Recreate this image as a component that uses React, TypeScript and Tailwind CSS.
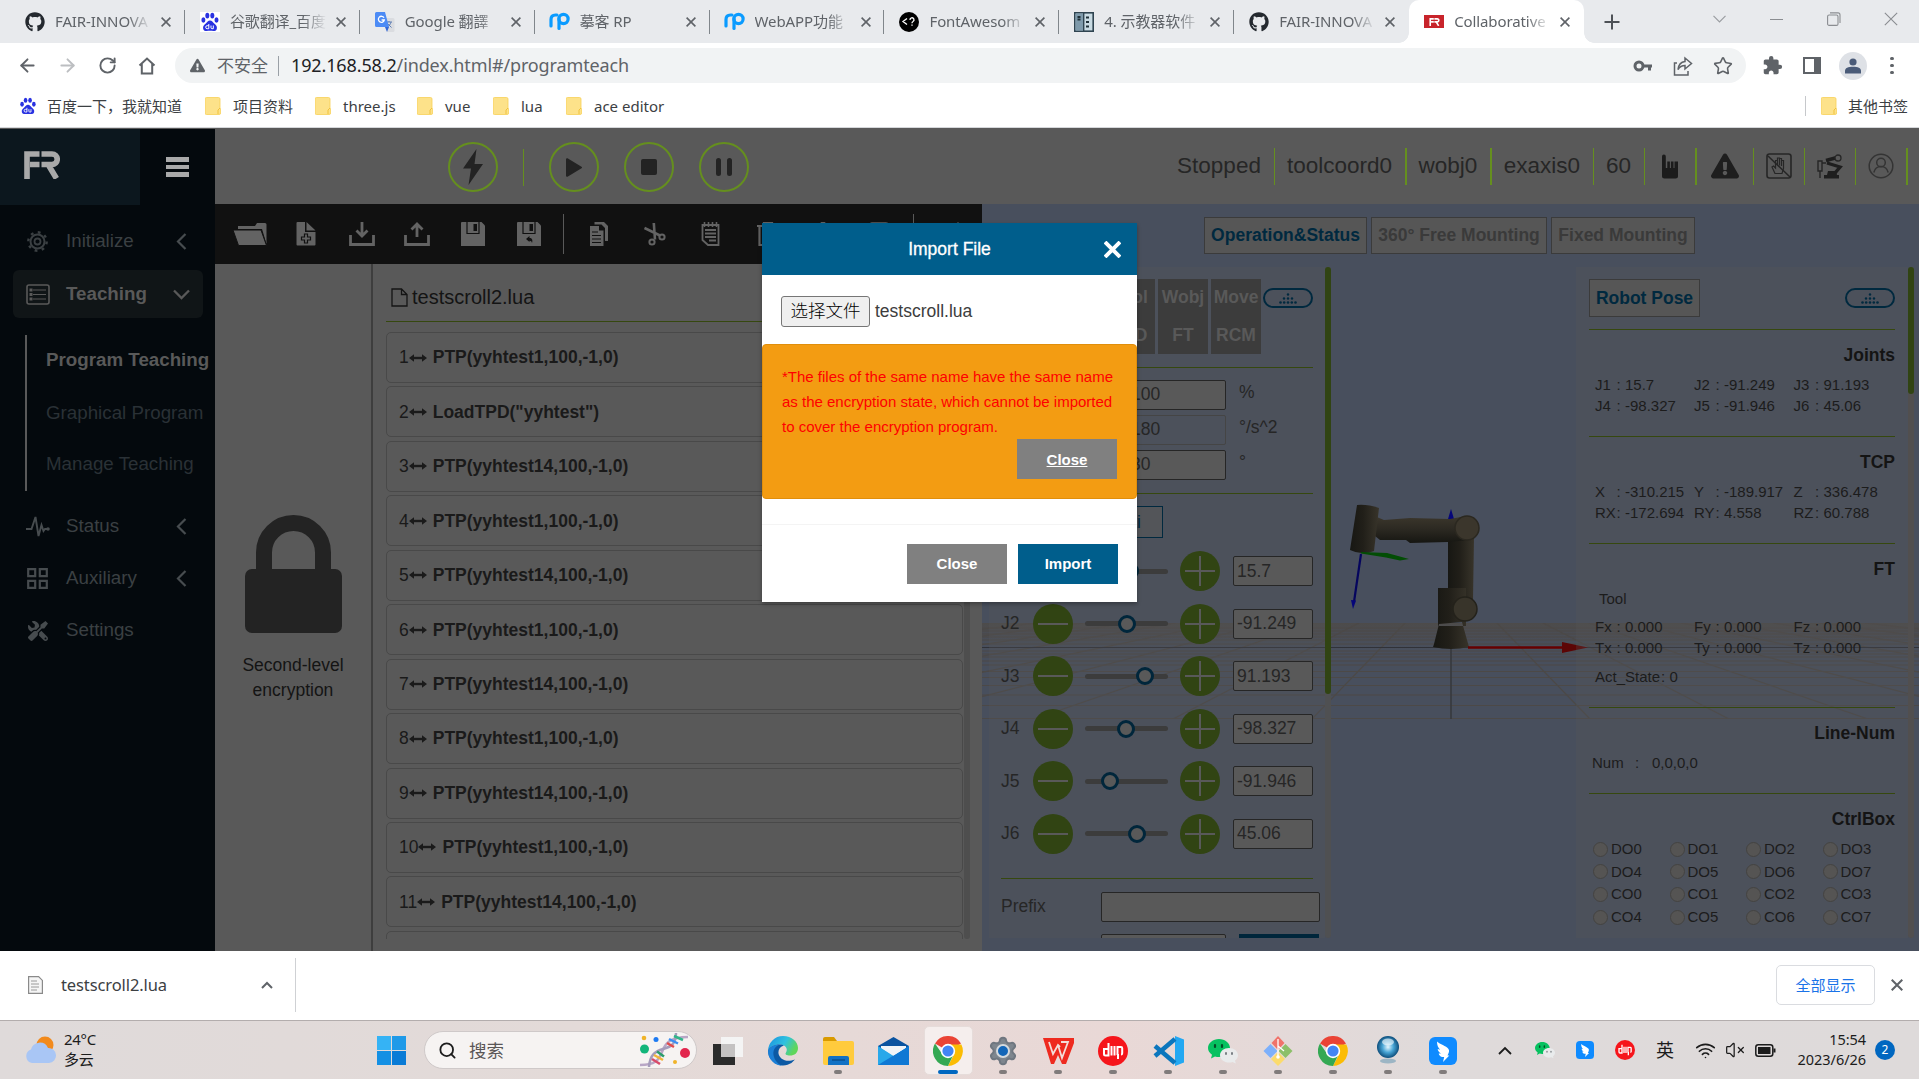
import React from "react";
import { FaGithub, FaExclamationTriangle, FaTools } from "react-icons/fa";
import { MdExtension } from "react-icons/md";
import { Settings, Wifi, VolumeX, Search, Star, RotateCw, ArrowLeft, ArrowRight } from "lucide-react";

type P = { children?: React.ReactNode; w: number; h: number; vb: string; className?: string };
const Svg = ({ children, w, h, vb, className }: P) => (
  <svg width={w} height={h} viewBox={vb} fill="none" className={`block shrink-0 ${className ?? ""}`}>
    {children}
  </svg>
);

const CHROME_FONT = "font-['Noto_Sans','Noto_Sans_CJK_SC',sans-serif]";

/* ---------- browser chrome ---------- */

const Baidu = ({ s = 20 }: { s?: number }) => (
  <Svg w={s} h={s} vb="0 0 20 20">
    <ellipse cx="3.4" cy="8" rx="2" ry="2.7" fill="#2932e1" />
    <ellipse cx="7.3" cy="3.6" rx="2" ry="2.9" fill="#2932e1" />
    <ellipse cx="12.3" cy="3.6" rx="2" ry="2.9" fill="#2932e1" />
    <ellipse cx="16.5" cy="8" rx="2" ry="2.7" fill="#2932e1" />
    <path d="M10 8.6c2 0 2.8 1.6 4.2 3 1.6 1.5 3.300 2.700 2.600 5.300-.8 2.800-4 1.900-6.800 1.900s-6 .9-6.800-1.900c-.7-2.600 1-3.800 2.600-5.300C7.200 10.200 8 8.600 10 8.600z" fill="#2932e1" />
    <path d="M8.800 12v4.700H7.200a1.500 1.500 0 010-3h1.600M11 13.500v2.300c0 .7.4.9 1 .9h1.300v-3.200" stroke="#fff" strokeWidth="1" />
  </Svg>
);

const Rp = () => (
  <Svg w={21} h={19} vb="0 0 21 19">
    <path d="M2 14V7.500C2 4.500 3.500 3 6.500 3H8" stroke="#0a9bff" strokeWidth="3.200" strokeLinecap="round" />
    <circle cx="14.500" cy="7" r="4.600" stroke="#0a9bff" strokeWidth="3.200" />
    <path d="M10 7v9.500" stroke="#0a9bff" strokeWidth="3.200" strokeLinecap="round" />
  </Svg>
);

const FrMark = ({ w, h, color }: { w: number; h: number; color: string }) => (
  <Svg w={w} h={h} vb="0 0 36 28">
    <path d="M3 28V3h12.500M6 13.500h9.500M17.500 3h10.500a5 5 0 010 10.500H17.500M25 15l7.500 12.500" stroke={color} strokeWidth="5.600" />
  </Svg>
);

const tabs = [
  { t: "FAIR-INNOVA", i: <FaGithub size={20} color="#24292f" /> },
  { t: "谷歌翻译_百度", i: <div className="bg-white"><Baidu /></div> },
  {
    t: "Google 翻譯",
    i: (
      <Svg w={20} h={20} vb="0 0 20 20">
        <path d="M8 6h10a1.500 1.500 0 011.500 1.500v11a1.500 1.500 0 01-1.500 1.500h-6z" fill="#dadce0" />
        <path d="M11 10h6M14 9v1M16 10c-.5 2.500-2 4-4 5M13 12l3.500 3.500" stroke="#5f7fb5" strokeWidth="1" />
        <path d="M1.500 0H10l4 15H1.500A1.500 1.500 0 010 13.500v-12A1.500 1.500 0 011.500 0z" fill="#4c8bf5" />
        <path d="M12 20l2-5h-4z" fill="#3367d6" />
        <path d="M9 5.800A3 3 0 109.300 8H6.600" stroke="#fff" strokeWidth="1.300" />
      </Svg>
    ),
  },
  { t: "摹客 RP", i: <Rp /> },
  { t: "WebAPP功能", i: <Rp /> },
  {
    t: "FontAwesom",
    i: (
      <Svg w={20} h={20} vb="0 0 20 20">
        <circle cx="10" cy="10" r="10" fill="#000" />
        <path d="M8 6.500L4 9.500l4 3M11 8a2 2 0 113 1.500c-.8.4-1 .8-1 1.700M13 12.500v1.300" stroke="#fff" strokeWidth="1.300" />
      </Svg>
    ),
  },
  {
    t: "4. 示教器软件",
    i: (
      <Svg w={20} h={20} vb="0 0 20 20">
        <rect x=".8" y=".8" width="18.400" height="18.400" fill="#c9dbe3" stroke="#2f4450" strokeWidth="1.600" />
        <rect x="1.500" y="1.500" width="7.500" height="17" fill="#7e9aab" />
        <path d="M9.700 1v18" stroke="#2f4450" strokeWidth="1.400" />
        <path d="M3.500 5h3M3.500 7.500h3M12 5.500h4M12 10h4M12 14.500h4" stroke="#1f3038" strokeWidth="2" strokeDasharray="3 1" />
      </Svg>
    ),
  },
  { t: "FAIR-INNOVA", i: <FaGithub size={20} color="#24292f" /> },
  {
    t: "Collaborative",
    i: (
      <div className="flex h-[13px] w-5 items-center justify-center bg-[#c8242b]">
        <FrMark w={13} h={8} color="#fff" />
      </div>
    ),
  },
];

const X = ({ s = 10, c = "#5f6368", sw = 1.6 }: { s?: number; c?: string; sw?: number }) => (
  <Svg w={s} h={s} vb="0 0 10 10">
    <path d="M.6.6l8.800 8.800M9.400.6L.6 9.400" stroke={c} strokeWidth={sw} />
  </Svg>
);

const TabStrip = () => (
  <div className="flex h-[43px] bg-[#e8eaed] pl-[10px]">
    {tabs.map((tab, i) => {
      const active = i === 8;
      return (
        <div
          key={i}
          className={`relative flex h-[43px] w-[174.900px] shrink-0 items-center pl-[15px] ${active ? "rounded-t-[10px] bg-white" : ""}`}
        >
          <div className="flex w-5 shrink-0 justify-center">{tab.i}</div>
          <div className="ml-[10px] w-[97px] text-[15px] tracking-[-0.100px] whitespace-nowrap text-[#5f6368] [mask-image:linear-gradient(to_right,#000_75%,transparent)]">
            {tab.t}
          </div>
          <div className="ml-[9px]">
            <X />
          </div>
          {i < 7 && <div className="absolute top-[10px] right-0 h-[24px] w-px bg-[#80868b]" />}
          {active && (
            <>
              <div className="absolute bottom-0 -left-[10px] size-[10px] bg-[radial-gradient(circle_at_0_0,#e8eaed_9.500px,#fff_10px)]" />
              <div className="absolute -right-[10px] bottom-0 size-[10px] bg-[radial-gradient(circle_at_100%_0,#e8eaed_9.500px,#fff_10px)]" />
            </>
          )}
        </div>
      );
    })}
    <div className="flex w-[55px] items-center justify-center">
      <Svg w={16} h={16} vb="0 0 16 16">
        <path d="M8 .5v15M.5 8h15" stroke="#4d5156" strokeWidth="2" />
      </Svg>
    </div>
    <div className="ml-auto flex h-[38px] w-[228px] items-center">
      <div className="flex w-[57px] justify-center">
        <Svg w={13} h={8} vb="0 0 13 8"><path d="M.5.8l6 6 6-6" stroke="#9a9da1" strokeWidth="1.200" /></Svg>
      </div>
      <div className="flex w-[57px] justify-center">
        <div className="h-px w-[13px] bg-[#8a8d91]" />
      </div>
      <div className="flex w-[57px] justify-center">
        <Svg w={14} h={14} vb="0 0 14 14">
          <rect x=".6" y="3" width="10.400" height="10.400" rx="1.500" stroke="#8a8d91" strokeWidth="1.100" />
          <path d="M3 .9h8a2 2 0 012 2v8" stroke="#8a8d91" strokeWidth="1.100" />
        </Svg>
      </div>
      <div className="flex w-[57px] justify-center"><X s={14} c="#8a8d91" sw={0.8} /></div>
    </div>
  </div>
);

const Toolbar = () => (
  <div className="flex h-[45px] items-center bg-white">
    <div className="flex w-[175px] items-center text-[#5f6368]">
      <div className="ml-[17px] w-[40px]"><ArrowLeft size={21} strokeWidth={2.200} /></div>
      <div className="w-[41px] text-[#bcbec1]"><ArrowRight size={21} strokeWidth={2.200} /></div>
      <div className="w-[40px]"><RotateCw size={19} strokeWidth={2.400} /></div>
      <Svg w={18} h={18} vb="0 0 18 18">
        <path d="M1.500 8.500L9 1.500l7.500 7M3.800 7v9.500h10.400V7" stroke="#5f6368" strokeWidth="2" />
      </Svg>
    </div>
    <div className="flex h-[35px] w-[1571px] items-center rounded-full bg-[#f1f3f4] pl-[15px]">
      <FaExclamationTriangle size={15} color="#5f6368" />
      <div className="ml-3 text-[17px] text-[#5f6368]">不安全</div>
      <div className="ml-[10px] h-5 w-px bg-[#9aa0a6]" />
      <div className="ml-[12px] text-[18px] tracking-[-0.130px] text-[#5f6368]">
        <span className="text-[#202124]">192.168.58.2</span>/index.html#/programteach
      </div>
      <div className="mr-[13px] ml-auto flex items-center gap-[20px]">
        <Svg w={20} h={12} vb="0 0 20 12">
          <circle cx="6" cy="6" r="4" stroke="#5f6368" strokeWidth="3" />
          <path d="M10 6h9M16.500 6v4.500" stroke="#5f6368" strokeWidth="3" />
        </Svg>
        <Svg w={20} h={20} vb="0 0 20 20">
          <path d="M4 7H1.500v12H15v-4M12 2l6.500 5.500L12 13v-3.500c-3.500 0-5.500 1.500-7 4 .5-4.500 2.500-7.500 7-8z" stroke="#5f6368" strokeWidth="1.500" />
        </Svg>
        <Star size={20} color="#5f6368" strokeWidth={1.900} />
      </div>
    </div>
    <div className="ml-[16px] flex items-center">
      <MdExtension size={21} color="#5f6368" />
      <div className="ml-[20px] h-[17px] w-[18px] border-[2.500px] border-r-[7px] border-[#5f6368]" />
      <div className="ml-[18px] flex size-[28px] items-center justify-center rounded-full bg-[#dee1e6]">
        <Svg w={16} h={16} vb="0 0 16 16">
          <circle cx="8" cy="4" r="3.600" fill="#4a5b78" />
          <path d="M0 15.500V13c0-3 3-4.300 8-4.300s8 1.300 8 4.300v2.500z" fill="#4a5b78" />
        </Svg>
      </div>
      <div className="ml-[23px] flex flex-col gap-[3.500px]">
        <i className="size-[3.500px] rounded-full bg-[#5f6368]" />
        <i className="size-[3.500px] rounded-full bg-[#5f6368]" />
        <i className="size-[3.500px] rounded-full bg-[#5f6368]" />
      </div>
    </div>
  </div>
);

const Folder = () => (
  <Svg w={16} h={18} vb="0 0 16 18">
    <path d="M1.500.5h12A1.500 1.500 0 0115 2v9l.6 1v4a1.500 1.500 0 01-1.500 1.500H1.500A1.500 1.500 0 010 16V2A1.500 1.500 0 011.500.5z" fill="#fde28a" stroke="#f7d057" strokeWidth=".8" />
    <path d="M13 17v-4l2-2" stroke="#f0c23c" strokeWidth="1" />
  </Svg>
);

const Bookmarks = () => (
  <div className="flex h-[40px] items-center border-b border-[#d5d7da] bg-white pb-[3px] pl-[19px] text-[15px] text-[#3c4043]">
    <Baidu s={18} />
    <span className="ml-[10px] w-[146px] whitespace-nowrap">百度一下，我就知道</span>
    <div className="ml-[12px] flex w-[110px] items-center gap-[12px]"><Folder />项目资料</div>
    <div className="flex w-[102px] items-center gap-[12px]"><Folder />three.js</div>
    <div className="flex w-[76px] items-center gap-[12px]"><Folder />vue</div>
    <div className="flex w-[73px] items-center gap-[12px]"><Folder />lua</div>
    <div className="flex items-center gap-[12px]"><Folder />ace editor</div>
    <div className="mr-[11px] ml-auto flex items-center">
      <div className="mr-[15px] h-[20px] w-px bg-[#c6c8cb]" />
      <Folder />
      <span className="ml-[11px]">其他书签</span>
    </div>
  </div>
);

/* ---------- application: sidebar ---------- */

const Chevron = ({ down }: { down?: boolean }) =>
  down ? (
    <Svg w={17} h={11} vb="0 0 17 11" className="-mr-px ml-auto"><path d="M1 1.500l7.500 7.500L16 1.500" stroke="#595959" strokeWidth="2.300" /></Svg>
  ) : (
    <Svg w={11} h={17} vb="0 0 11 17" className="mr-[2px] ml-auto"><path d="M9.500 1L2 8.500 9.500 16" stroke="#474c4f" strokeWidth="2.200" /></Svg>
  );

const SideRow = ({ icon, label, chev, active }: { icon: React.ReactNode; label: string; chev?: boolean; active?: boolean }) => (
  <div className={`mr-[12px] ml-[13px] flex h-[48px] shrink-0 items-center rounded-md pr-[14px] pl-[12px] ${active ? "bg-[#101517] font-bold text-[#595959]" : "text-[#3b4043]"}`}>
    <div className="flex w-[25px] justify-center">{icon}</div>
    <span className="ml-[16px] text-[18.750px]">{label}</span>
    {chev && <Chevron down={active} />}
  </div>
);

const Sidebar = () => (
  <aside className="flex h-[822px] w-[215px] shrink-0 flex-col bg-[#04090d]">
    <div className="flex h-[76px] shrink-0">
      <div className="w-[140px] bg-[#0c171e] pt-[22px] pl-6"><FrMark w={36} h={28} color="#a9a9a9" /></div>
      <div className="flex flex-col gap-[3px] pt-[28px] pl-[26px]">
        <i className="h-[4.500px] w-[23px] bg-[#a9a9a9]" />
        <i className="h-[4.500px] w-[23px] bg-[#a9a9a9]" />
        <i className="h-[4.500px] w-[23px] bg-[#a9a9a9]" />
      </div>
    </div>
    <div className="mt-[12px]" />
    <SideRow
      label="Initialize"
      chev
      icon={
        <Svg w={21} h={21} vb="0 0 21 21">
          <circle cx="10.500" cy="10.500" r="7" stroke="#3b4043" strokeWidth="2" />
          <circle cx="10.500" cy="10.500" r="3" stroke="#3b4043" strokeWidth="1.800" />
          <circle cx="10.500" cy="10.500" r="9.200" stroke="#3b4043" strokeWidth="2.400" strokeDasharray="2.800 4.425" />
        </Svg>
      }
    />
    <div className="h-[5px]" />
    <SideRow
      label="Teaching"
      chev
      active
      icon={
        <Svg w={24} h={21} vb="0 0 24 21">
          <rect x="1" y="1" width="22" height="19" rx="2" stroke="#595959" strokeWidth="1.600" />
          <path d="M7 6h13M7 10.500h13M7 15h13" stroke="#595959" strokeWidth="1.200" />
          <path d="M3.500 6h3M3.500 10.500h3M3.500 15h3" stroke="#595959" strokeWidth="3" />
        </Svg>
      }
    />
    <div className="mt-[17px] ml-[25px] flex h-[156px] shrink-0 flex-col border-l-2 border-[#595959] pl-[19px] text-[18.750px] leading-[52px] whitespace-nowrap text-[#2a3136]">
      <div className="h-[52px] leading-[50px] font-bold text-[#595959]">Program Teaching</div>
      <div className="h-[52px]">Graphical Program</div>
      <div className="h-[52px] leading-[50px]">Manage Teaching</div>
    </div>
    <div className="h-[11px]" />
    <SideRow
      label="Status"
      chev
      icon={
        <Svg w={24} h={21} vb="0 0 24 21">
          <path d="M0 13h5.500l4-12 3 19 3-11 2 6 1.500-2h3" stroke="#474c4f" strokeWidth="1.900" />
          <circle cx="22" cy="13" r="1.800" fill="#474c4f" />
        </Svg>
      }
    />
    <div className="h-[4.500px]" />
    <SideRow
      label="Auxiliary"
      chev
      icon={
        <Svg w={21} h={21} vb="0 0 21 21">
          <path d="M1.200 1.200h7v7h-7zM12.800 1.200h7v7h-7zM1.200 12.800h7v7h-7zM12.800 12.800h7v7h-7z" stroke="#474c4f" strokeWidth="2.200" />
        </Svg>
      }
    />
    <div className="h-[4px]" />
    <SideRow label="Settings" icon={<FaTools size={20} color="#474c4f" className="-scale-x-100" />} />
  </aside>
);

/* ---------- application: header ---------- */

const Round = ({ children }: { children: React.ReactNode }) => (
  <div className="flex size-[50px] items-center justify-center rounded-full border-2 border-[#658f1e]">{children}</div>
);

const Cell = ({ w, thick, children }: { w: string; thick?: boolean; children: React.ReactNode }) => (
  <div className={`flex h-[37px] items-center justify-center pr-px ${w} ${thick ? "border-r-2" : "border-r"} border-[#658f1e]`}>{children}</div>
);

const Header = () => (
  <header className="flex h-[75px] shrink-0 items-center bg-[#595959] pt-px pl-[233px] text-[22.500px] text-[#262626]">
    <div className="flex items-center">
      <Round>
        <Svg w={20} h={36} vb="0 0 20 36"><path d="M13.500 0L0 19.500h8L5.500 36 20 15h-8.500z" fill="#232323" /></Svg>
      </Round>
      <div className="ml-[25px] h-[37px] w-px bg-[#658f1e]" />
      <div className="ml-[25px] flex gap-[25px]">
        <Round>
          <Svg w={16} h={19} vb="0 0 16 19"><path d="M1 1.200v16.600L15 9.500z" fill="#232323" stroke="#232323" strokeWidth="2" strokeLinejoin="round" /></Svg>
        </Round>
        <Round><div className="size-4 rounded-[2px] bg-[#232323]" /></Round>
        <Round>
          <div className="flex gap-[6px]">
            <i className="h-[18px] w-[5px] rounded-sm bg-[#232323]" />
            <i className="h-[18px] w-[5px] rounded-sm bg-[#232323]" />
          </div>
        </Round>
      </div>
    </div>
    <div className="mr-[11px] ml-auto flex items-center pb-[2px]">
      <Cell w="w-[110px]">Stopped</Cell>
      <Cell w="w-[132px]" thick>toolcoord0</Cell>
      <Cell w="w-[85px]" thick>wobj0</Cell>
      <Cell w="w-[102px]">exaxis0</Cell>
      <Cell w="w-[51px]">60</Cell>
      <Cell w="w-[52px]" thick>
        <Svg w={18} h={25} vb="0 0 18 25">
          <path d="M1 2.500a1.900 1.900 0 013.800 0V14h1.500V7.500h2.600V14h1V7.500h2.600V14h1V7.500h3.500V22a2.500 2.500 0 01-2.500 2.500h-11A2.500 2.500 0 011 22z" fill="#1b1b1b" />
        </Svg>
      </Cell>
      <Cell w="w-[57px]"><FaExclamationTriangle size={28} color="#1e1e1e" /></Cell>
      <Cell w="w-[51px]">
        <Svg w={26} h={26} vb="0 0 26 26">
          <rect x="1" y="1" width="24" height="24" rx="2.500" stroke="#262626" strokeWidth="1.600" />
          <path d="M9 20.500l-3-6.500 1.500-1 2 2V7.500h2v5V5h2v7.500-7h2V13V7.500h2v8l-1.500 5z" stroke="#262626" strokeWidth="1.200" />
          <path d="M2 3l22 21" stroke="#262626" strokeWidth="1.500" />
        </Svg>
      </Cell>
      <Cell w="w-[51px]">
        <Svg w={26} h={25} vb="0 0 26 25">
          <path d="M1 7h4v10H1zM3 17v7M5 9h4" stroke="#262626" strokeWidth="1.400" />
          <path d="M9 6.500l11-3M10 9l13 4-5 6" stroke="#1e1e1e" strokeWidth="3.400" />
          <circle cx="21" cy="4" r="3" stroke="#262626" strokeWidth="1.300" fill="#595959" />
          <path d="M11 17h8l1 4h2v3.500H7V21h3z" fill="#1e1e1e" />
        </Svg>
      </Cell>
      <Cell w="w-[52px]" thick>
        <Svg w={26} h={26} vb="0 0 26 26">
          <circle cx="13" cy="13" r="11.800" stroke="#343434" strokeWidth="1.500" />
          <circle cx="13" cy="9.500" r="4.300" stroke="#343434" strokeWidth="1.500" />
          <path d="M5.800 19.500c1-4 3.500-6 7.200-6s6.200 2 7.200 6" stroke="#343434" strokeWidth="1.500" />
        </Svg>
      </Cell>
    </div>
  </header>
);

/* ---------- application: program editor ---------- */

const G = "#636363";

const EditorTools = () => (
  <div className="flex h-[60px] shrink-0 items-center overflow-hidden bg-[#111111] pb-px">
    <Svg w={34} h={24} vb="0 0 34 24" className="ml-[18px]">
      <path d="M5 4h17l2-3h8a1.500 1.500 0 011.500 1.500V22L29 7H5z" fill={G} />
      <path d="M0 8h28l5.500 15.500h-28z" fill={G} stroke="#111" strokeWidth="1" />
    </Svg>
    <Svg w={20} h={24} vb="0 0 20 24" className="ml-[29px]">
      <path d="M1.500 0H9v10h10.500v12.500a1 1 0 01-1 1H1.500a1 1 0 01-1-1V1a1 1 0 011-1z" fill={G} />
      <path d="M10.500 0l9 8.500h-9z" fill={G} />
      <path d="M8.500 12h3v3h3v3h-3v3h-3v-3h-3v-3h3z" stroke="#111" strokeWidth="1.200" />
    </Svg>
    <Svg w={26} h={24} vb="0 0 26 24" className="ml-[33px]">
      <path d="M1.500 13v9.500h23V13" stroke={G} strokeWidth="2.800" />
      <path d="M13 0v13M7.500 8.500L13 14l5.500-5.500" stroke={G} strokeWidth="2.800" />
    </Svg>
    <Svg w={26} h={24} vb="0 0 26 24" className="ml-[29px]">
      <path d="M1.500 13v9.500h23V13" stroke={G} strokeWidth="2.800" />
      <path d="M13 15V2M7.500 7.500L13 2l5.500 5.500" stroke={G} strokeWidth="2.800" />
    </Svg>
    {[0, 1].map((k) => (
      <Svg key={k} w={24} h={24} vb="0 0 24 24" className={k ? "ml-[32px]" : "ml-[31px]"}>
        <path d="M1 0h19.500L24 3.500V24H0V1a1 1 0 011-1z" fill={G} />
        <path d="M6 0v11.500h12V0" stroke="#111" strokeWidth="1.200" />
        <path d="M12.500 2h3.500v7h-3.500z" fill="#111" />
        {k === 1 && <path d="M9 17l3.500-3v2c2.500 0 3.500 2 2.500 5-.3-1.500-1-2.300-2.500-2.300V20z" fill="#111" />}
      </Svg>
    ))}
    <div className="ml-[22px] h-[40px] w-px bg-[#595959]" />
    <Svg w={18} h={24} vb="0 0 18 24" className="ml-[26px]">
      <path d="M4.500 0H14l4 4v15h-3V6l-3.500-3.500h-7z" fill={G} />
      <path d="M0 4h9v4.500h4.500V24H0z" fill={G} />
      <path d="M2 10h6M2 13.500h9M2 17h9M2 20.500h9" stroke="#111" strokeWidth="1" />
    </Svg>
    <Svg w={22} h={24} vb="0 0 22 24" className="ml-[36px]">
      <path d="M9.800 1L11 17.500M.5 6l15.500 7.500" stroke={G} strokeWidth="2.600" />
      <circle cx="8" cy="20" r="2.600" stroke={G} strokeWidth="2" />
      <circle cx="18" cy="15" r="2.600" stroke={G} strokeWidth="2" />
    </Svg>
    <Svg w={19} h={24} vb="0 0 19 24" className="ml-[35px]">
      <path d="M1.500 3h16v20H7l-5.500-5z" stroke={G} strokeWidth="1.800" />
      <path d="M4 8h11M4 11.500h11M4 15h11M8 18.500h7" stroke={G} strokeWidth="2" />
      <path d="M3.500 0v5M7.500 0v5M11.500 0v5M15.500 0v5" stroke={G} strokeWidth="1.600" />
    </Svg>
    <Svg w={22} h={24} vb="0 0 22 24" className="ml-[37px]">
      <path d="M0 4h22M7 3V1h8v2M2.500 4v19h17V4" stroke={G} strokeWidth="2.200" />
    </Svg>
    <Svg w={20} h={24} vb="0 0 20 24" className="ml-[34px]"><path d="M10 0l8 8H2zM10 6v17" stroke={G} strokeWidth="2.500" /></Svg>
    <Svg w={20} h={24} vb="0 0 20 24" className="ml-[36px]"><rect x="1" y="1.500" width="18" height="21" rx="2" stroke={G} strokeWidth="2.400" /></Svg>
    <div className="ml-[24px] h-[40px] w-px bg-[#595959]" />
    <Svg w={20} h={24} vb="0 0 20 24" className="ml-[34px]"><path d="M10 0l8 8H2z" fill={G} /></Svg>
  </div>
);

const code = [
  "PTP(yyhtest1,100,-1,0)",
  'LoadTPD("yyhtest")',
  "PTP(yyhtest14,100,-1,0)",
  "PTP(yyhtest1,100,-1,0)",
  "PTP(yyhtest14,100,-1,0)",
  "PTP(yyhtest1,100,-1,0)",
  "PTP(yyhtest14,100,-1,0)",
  "PTP(yyhtest1,100,-1,0)",
  "PTP(yyhtest14,100,-1,0)",
  "PTP(yyhtest1,100,-1,0)",
  "PTP(yyhtest14,100,-1,0)",
];

const Editor = () => (
  <section className="flex w-[767px] shrink-0 flex-col bg-[#595959]">
    <EditorTools />
    <div className="flex h-[687px]">
      <div className="flex w-[158px] shrink-0 flex-col items-center border-r-2 border-[#3e3e3e] pt-[251px] text-center text-[17.500px] leading-[25px] text-[#141414]">
        <Svg w={97} h={118} vb="0 0 97 118">
          <path d="M19 60V37.500a29.500 29.500 0 0159 0V60" stroke="#232323" strokeWidth="16" />
          <rect x="0" y="54" width="97" height="64" rx="7" fill="#232323" />
        </Svg>
        <div className="mt-[20px]">Second-level<br />encryption</div>
      </div>
      <div className="flex w-[598px] flex-col pl-[13px]">
        <div className="flex h-[58px] w-[577px] shrink-0 items-center border-b border-[#36480f] pt-[9px] pl-[5px] text-[20px] text-[#141414]">
          <Svg w={17} h={19} vb="0 0 17 19" className="mr-[4px]">
            <path d="M1 1h9.500l5.500 5.500V18H1zM10.500 1v5.500H16" stroke="#141414" strokeWidth="1.300" />
          </Svg>
          testscroll2.lua
        </div>
        <div className="mt-[10px] flex h-[607px] overflow-hidden">
          <div className="w-[577px]">
            {code.map((c, i) => (
              <div key={i} className="mb-[3.450px] flex h-[51px] items-center rounded-[5px] border border-[#494949] pl-[12px] text-[17.500px] text-[#1a1a1a]">
                <span>{i + 1}</span>
                <Svg w={18} h={8} vb="0 0 18 8">
                  <path d="M3 4h12" stroke="#1a1a1a" strokeWidth="2.400" />
                  <path d="M5 .3v7.400L0 4zM13 .3v7.400L18 4z" fill="#1a1a1a" />
                </Svg>
                <b className="ml-[6px]">{c}</b>
              </div>
            ))}
            <div className="h-[51px] rounded-[5px] border border-[#494949]" />
          </div>
          <div className="ml-px w-[6px] rounded-full bg-[#4e4e4e]" />
        </div>
      </div>
    </div>
  </section>
);

/* ---------- application: 3D scene and panels ---------- */

const Scene = () => {
  const rows = [424, 427, 430, 433, 436, 440, 447, 450, 453, 457, 461, 467.5, 473.5, 481.5, 491, 501.5, 514.5];
  const rays = [-9, -8, -7, -6, -5, -4, -3, -2, -1, 1, 2, 3, 4, 5, 6, 7, 8, 9];
  return (
    <svg width="937" height="747" viewBox="0 0 937 747" fill="none" className="absolute inset-0">
      <defs>
        <linearGradient id="floor" x1="0" y1="0" x2="0" y2="1">
          <stop offset="0" stopColor="#4d4b4a" />
          <stop offset="1" stopColor="#484f5d" stopOpacity="0" />
        </linearGradient>
        <linearGradient id="arm" x1="0" y1="0" x2="0" y2="1">
          <stop offset="0" stopColor="#3d382d" />
          <stop offset=".5" stopColor="#2c2922" />
          <stop offset="1" stopColor="#161612" />
        </linearGradient>
        <linearGradient id="armv" x1="0" y1="0" x2="1" y2="0">
          <stop offset="0" stopColor="#171713" />
          <stop offset=".45" stopColor="#211f19" />
          <stop offset="1" stopColor="#38342a" />
        </linearGradient>
        <clipPath id="ground"><rect x="0" y="419" width="937" height="96" /></clipPath>
      </defs>
      <rect y="419" width="937" height="34" fill="url(#floor)" />
      <g clipPath="url(#ground)" stroke="#4c4947" strokeWidth="1.200">
        {rows.map((y) => <path key={y} d={`M0 ${y}H937`} />)}
        {rays.map((r) => <path key={r} d={`M${469 + r * 46} 419L${469 + r * 139} 515`} />)}
      </g>
      <path d="M0 443.500H937" stroke="#303238" />
      <path d="M469 443v72" stroke="#37393e" strokeWidth="1.600" />
      <path d="M466 315l3-10 3 10z" fill="#05057a" />
      <path d="M466 334h26l-1 62h-25z" fill="url(#armv)" />
      <path d="M390 311l12 5 26-2 40 1 16-3 4 24-22 2-38 1-4-3h-26l-5-4z" fill="url(#arm)" />
      <path d="M375 301q10-1 22 3l-5 43q-12 5-24-1z" fill="url(#armv)" />
      <path d="M456 384h28v38h-28zM457 420l-5 20-1 3q18 4 36 0l-7-25z" fill="url(#armv)" />
      <circle cx="485" cy="324" r="12" fill="#3b362c" stroke="#2b2820" strokeWidth="1.500" />
      <circle cx="483" cy="405" r="12" fill="#38342a" stroke="#24221b" strokeWidth="1.500" />
      <path d="M379 348l26 1 22 6-9 1.500-14-3-25-4z" fill="#024d04" />
      <path d="M379 350l-7 48" stroke="#05055e" strokeWidth="2.200" />
      <path d="M369 396l5 .5L371 405z" fill="#05057a" />
      <path d="M486 443.500h96" stroke="#660000" strokeWidth="2.500" />
      <path d="M580 438l26 5.500-26 5.500z" fill="#5c0505" />
    </svg>
  );
};

const Pill = () => (
  <div className="flex h-5 w-[50px] items-center justify-center rounded-full border-2 border-[#00293f]">
    <Svg w={18} h={11} vb="0 0 18 11">
      <g fill="#00293f">
        <circle cx="9" cy="1.500" r="1.200" />
        <circle cx="5" cy="5.500" r="1.200" /><circle cx="9" cy="5.500" r="1.200" /><circle cx="13" cy="5.500" r="1.200" />
        <circle cx="1.500" cy="9.500" r="1.300" /><circle cx="5.200" cy="9.500" r="1.300" /><circle cx="9" cy="9.500" r="1.300" /><circle cx="12.800" cy="9.500" r="1.300" /><circle cx="16.500" cy="9.500" r="1.300" />
      </g>
    </Svg>
  </div>
);

const boxBtn = "flex items-center justify-center border border-[#3b3b3b] bg-[#565656] text-[17.500px] font-bold whitespace-nowrap";
const joints = [
  { v: "15.7", x: 45 },
  { v: "-91.249", x: 41.5 },
  { v: "91.193", x: 60 },
  { v: "-98.327", x: 40.5 },
  { v: "-91.946", x: 24.5 },
  { v: "45.06", x: 51.5 },
];
const input = "flex shrink-0 items-center rounded-[2px] border bg-[#595959] pb-px text-[17.500px]";
const modeCells = [["Base", "IO"], ["Tool", "TPD"], ["Wobj", "FT"], ["Move", "RCM"]];

const Dot = ({ minus }: { minus?: boolean }) => (
  <Svg w={40} h={40} vb="0 0 40 40">
    <circle cx="20" cy="20" r="20" fill="#314413" />
    <path d={minus ? "M5 20h30" : "M5 20h30M20 5v30"} stroke="#595959" strokeWidth="2" />
  </Svg>
);

const OperationPanel = () => (
  <div className="flex h-[671px] shrink-0">
    <div className="flex w-[336px] flex-col overflow-hidden bg-[#595959]/25 pl-[12px] text-[17.500px] text-[#262626]">
      <div className="flex w-[312px] shrink-0 pt-[12px]">
        <div className="flex w-[260px] justify-end gap-[3px]">
          {modeCells.map(([a, b]) => (
            <div key={a} className="flex h-[75px] w-[50px] flex-col bg-[#3c3c3c] text-center font-bold text-[#595959]">
              <span className="h-[37px] leading-[36px]">{a}</span>
              <span className="h-[38px] leading-[38px]">{b}</span>
            </div>
          ))}
        </div>
        <div className="mt-[9px] ml-[2px]"><Pill /></div>
      </div>
      <div className="mt-[13px] h-px w-[312px] shrink-0 bg-[#36480f]" />
      <div className="mt-[12px] flex shrink-0 flex-col gap-[5px]">
        {[["100", "%", "border-[#262626]"], ["180", "°/s^2", "border-[#454545] bg-transparent"], ["30", "°", "border-[#262626]"]].map(([v, u, b]) => (
          <div key={u} className="flex h-[30px]">
            <div className={`${input} ${b} ml-[100px] h-[30px] w-[125px] pl-[29px]`}>{v}</div>
            <span className="ml-[13px] leading-[24px]">{u}</span>
          </div>
        ))}
      </div>
      <div className="mt-[13px] h-px w-[312px] shrink-0 bg-[#36480f]" />
      <div className="mt-[12px] flex h-[32px] w-[162px] shrink-0 items-center justify-end border border-[#00293f] bg-[#595959]/60 pr-[21px] text-[#00293f]">Multi</div>
      <div className="mt-[7px] shrink-0">
        {joints.map((j, i) => (
          <div key={i} className="flex h-[52.500px] items-center">
            <span className="w-[32px] pb-px">J{i + 1}</span>
            <Dot minus />
            <div className="relative ml-[12px] h-[5px] w-[83px] rounded-full bg-[#3c3c3c]">
              <div className="absolute -top-[6.500px] size-[18px] -translate-x-1/2 rounded-full border-3 border-[#00263b] bg-[#595959]" style={{ left: j.x }} />
            </div>
            <div className="ml-[12px]"><Dot /></div>
            <div className={`${input} ml-[13px] h-[30px] w-[80px] border-[#262626] pl-[3px]`}>{j.v}</div>
          </div>
        ))}
      </div>
      <div className="mt-[18px] h-px w-[312px] shrink-0 bg-[#36480f]" />
      <div className="mt-[13px] flex shrink-0">
        <span className="w-[100px] leading-[28px]">Prefix</span>
        <div className={`${input} h-[30px] w-[219px] border-[#262626]`} />
      </div>
      <div className="mt-[12px] flex shrink-0">
        <div className={`${input} ml-[100px] h-[30px] w-[125px] border-[#262626]`} />
        <div className="ml-[13px] h-[30px] w-[80px] bg-[#00263b]" />
      </div>
    </div>
    <div className="w-[6px] rounded-full bg-[#4f5052]"><div className="h-[427px] rounded-full bg-[#314413]" /></div>
  </div>
);

const Sect = ({ title, h, children }: { title: string; h: string; children: React.ReactNode }) => (
  <div className={`w-[306px] shrink-0 border-t border-[#36480f] ${h}`}>
    <div className="mt-[12px] mb-[6px] h-[26px] text-right text-[17.500px] leading-[26px] font-bold text-[#141414]">{title}</div>
    {children}
  </div>
);

const Trio = ({ d }: { d: [string, string][] }) => (
  <div className="grid grid-cols-[99px_99.500px_1fr] pl-[6px] leading-[21.300px]">
    {d.map(([k, v]) => (
      <div key={k} className="flex whitespace-nowrap">
        <span className="w-[21.500px]">{k}</span>
        <span className="w-[8.500px]">:</span>
        {v}
      </div>
    ))}
  </div>
);

const PosePanel = () => (
  <div className="ml-auto flex h-[671px] shrink-0">
    <div className="flex w-[332px] flex-col overflow-hidden bg-[#595959]/25 pl-[13px] text-[15px] text-[#1c1c1c]">
      <div className="flex h-[62px] w-[306px] shrink-0 justify-between pt-[12px]">
        <div className={`${boxBtn} h-[38px] w-[111px] text-[#00293f]`}>Robot Pose</div>
        <div className="pt-[9px]"><Pill /></div>
      </div>
      <Sect title="Joints" h="h-[107px]">
        <Trio d={[["J1", "15.7"], ["J2", "-91.249"], ["J3", "91.193"], ["J4", "-98.327"], ["J5", "-91.946"], ["J6", "45.06"]]} />
      </Sect>
      <Sect title="TCP" h="h-[107px]">
        <Trio d={[["X", "-310.215"], ["Y", "-189.917"], ["Z", "336.478"], ["RX", "-172.694"], ["RY", "4.558"], ["RZ", "60.788"]]} />
      </Sect>
      <Sect title="FT" h="h-[164px]">
        <div className="mb-[6.500px] pl-[10px] leading-[21.500px]">Tool</div>
        <Trio d={[["Fx", "0.000"], ["Fy", "0.000"], ["Fz", "0.000"], ["Tx", "0.000"], ["Ty", "0.000"], ["Tz", "0.000"]]} />
        <div className="mt-[7px] pl-[6px] leading-[21px]">Act_State<span className="ml-px">: 0</span></div>
      </Sect>
      <Sect title="Line-Num" h="h-[86px]">
        <div className="flex pl-[3px] leading-[21px]"><span className="w-[43px]">Num</span><span className="w-[17px]">:</span>0,0,0,0</div>
      </Sect>
      <Sect title="CtrlBox" h="h-[145px]">
        <div className="grid grid-cols-[76.500px_76.500px_76.500px_1fr] pl-[4px] leading-[22.600px]">
          {["DO0", "DO1", "DO2", "DO3", "DO4", "DO5", "DO6", "DO7", "CO0", "CO1", "CO2", "CO3", "CO4", "CO5", "CO6", "CO7"].map((n) => (
            <div key={n} className="flex items-center gap-[3px]">
              <i className="size-[15px] rounded-full border border-[#444341] bg-[#555453]" />
              {n}
            </div>
          ))}
        </div>
      </Sect>
    </div>
    <div className="w-[6px] rounded-full bg-[#514f4f]"><div className="h-[127px] rounded-full bg-[#314413]" /></div>
  </div>
);

const Workspace = () => (
  <section className="relative w-[937px] overflow-hidden bg-[#484f5d]">
    <Scene />
    <div className="relative flex h-[747px] flex-col">
      <div className="flex h-[63px] shrink-0 gap-[4px] pt-[13px] pl-[222px]">
        <div className={`${boxBtn} h-[37px] w-[163px] text-[#00293f]`}>Operation&amp;Status</div>
        <div className={`${boxBtn} h-[37px] w-[176px] text-[#3a3a3a]`}>360° Free Mounting</div>
        <div className={`${boxBtn} h-[37px] w-[144px] text-[#3a3a3a]`}>Fixed Mounting</div>
      </div>
      <div className="flex pr-[5px] pl-[7px]">
        <OperationPanel />
        <PosePanel />
      </div>
    </div>
  </section>
);

/* ---------- dialog ---------- */

const Dialog = () => (
  <div className="absolute top-[223px] left-[762px] flex h-[379px] w-[375px] flex-col bg-white shadow-[0_2px_4px_rgba(0,0,0,0.3)]">
    <div className="relative flex h-[52px] shrink-0 items-center justify-center bg-[#005e8c] text-[17.500px] text-white [-webkit-text-stroke:0.300px_white]">
      Import File
      <div className="absolute right-[16px]"><X s={17} c="#fff" sw={2.300} /></div>
    </div>
    <div className="flex h-[69px] shrink-0 items-center pt-[3px] pl-[19px] text-[17.500px] text-[#3d3d3d]">
      <div className="flex h-[31px] w-[89px] items-center justify-center rounded-[3px] border border-[#767676] bg-[#efefef] pb-[2px] font-['Noto_Sans_CJK_SC',sans-serif] font-light text-black">
        选择文件
      </div>
      <span className="ml-[5px]">testscroll.lua</span>
    </div>
    <div className="flex h-[155px] shrink-0 flex-col rounded-[4px] border border-[#e08e0b] bg-[#f39c12] pt-[19px] pl-[19px] text-[15px] leading-[25px] whitespace-nowrap text-[#ff0000]">
      <div>*The files of the same name have the same name</div>
      <div>as the encryption state, which cannot be imported</div>
      <div>to cover the encryption program.</div>
      <div className="mr-[19px] ml-auto flex h-[40px] w-[100px] shrink-0 items-center justify-center bg-[#808080] font-bold text-white underline">Close</div>
    </div>
    <div className="mt-[25px] flex h-[78px] shrink-0 gap-[11px] border-t border-[#f4f4f4] pt-[19px] pl-[145px] text-[15px] font-bold text-white">
      <div className="flex h-[40px] w-[100px] items-center justify-center bg-[#808080]">Close</div>
      <div className="flex h-[40px] w-[100px] items-center justify-center bg-[#005e8c]">Import</div>
    </div>
  </div>
);

/* ---------- download shelf and taskbar ---------- */

const Shelf = () => (
  <div className="flex h-[69px] shrink-0 items-center bg-white pb-px">
    <div className="flex h-[54px] w-[296px] items-center border-r border-[#cfd1d4] pl-[28px]">
      <Svg w={15} h={18} vb="0 0 15 18">
        <path d="M.6.6h10l3.800 3.800v13H.6z" fill="#f5f5f5" stroke="#8a8a8a" strokeWidth="1.200" />
        <path d="M3 5h6M3 8h8M3 11h8M3 14h6" stroke="#9a9a9a" strokeWidth="1" />
      </Svg>
      <span className="ml-[18px] text-[16.500px] tracking-[-0.100px] text-[#3c4043]">testscroll2.lua</span>
      <Svg w={12} h={8} vb="0 0 12 8" className="mr-[22px] ml-auto"><path d="M1 7l5-5 5 5" stroke="#5f6368" strokeWidth="2" /></Svg>
    </div>
    <div className="ml-auto flex h-[40px] w-[99px] items-center justify-center rounded-[5px] border border-[#dadce0] text-[15px] text-[#1a73e8]">全部显示</div>
    <div className="mr-[16px] ml-[16px]"><X s={12} sw={1.700} /></div>
  </div>
);

const Chrome = () => (
  <Svg w={30} h={30} vb="0 0 30 30">
    <path d="M15 15L2 7.500A15 15 0 0128 7.500z" fill="#ea4335" />
    <path d="M15 8.500h13.400A15 15 0 0115 30l6-11.500z" fill="#fbbc04" />
    <path d="M15 30l5.600-11.700L9.400 18.300 2 7.500A15 15 0 0015 30z" fill="#34a853" />
    <circle cx="15" cy="15" r="7.200" fill="#fff" />
    <circle cx="15" cy="15" r="5.600" fill="#4285f4" />
  </Svg>
);
const WeChat = ({ s = 30 }: { s?: number }) => (
  <Svg w={s} h={s} vb="0 0 30 30">
    <path d="M11 3c6 0 11 4 11 9s-5 9-11 9c-1.500 0-2.500-.2-4-.6L3 22.500l1-3.700C1.500 17 0 14.700 0 12c0-5 5-9 11-9z" fill="#07c160" />
    <path d="M21 12c5 0 9 3.200 9 7.300 0 2.200-1.200 4-3 5.300l.8 2.900-3.300-1.500c-1 .4-2.200.6-3.500.6-5 0-9-3.200-9-7.300S16 12 21 12z" fill="#e9ebec" />
    <path d="M7 9v2M14 9v2" stroke="#064d27" strokeWidth="2.200" strokeLinecap="round" />
    <path d="M18 17v1M24 17v1" stroke="#7a8085" strokeWidth="2" strokeLinecap="round" />
  </Svg>
);
const Ding = ({ s = 28 }: { s?: number }) => (
  <Svg w={s} h={s} vb="0 0 28 28">
    <rect width="28" height="28" rx="6" fill="#0f8bff" />
    <path d="M8 4.500c3 3 9 4 11.500 7.500 1.200 1.800.4 3.800-1 6.500h1.800L14 25l1.200-5H13c-2-.8-3-2-3.300-3.600l2.300.2C9.800 15 8.800 13.500 8.700 12l2.500.8C9 10.600 8 8 8 4.500z" fill="#fff" />
  </Svg>
);
const RedDisc = ({ s = 30 }: { s?: number }) => (
  <Svg w={s} h={s} vb="0 0 30 30">
    <circle cx="15" cy="15" r="15" fill="#f6151b" />
    <path d="M10.500 7v12.500H7.500a1.500 1.500 0 01-1.500-1.500v-5h4M13.500 10v9.500M16.500 10v9.500M19.500 19V11h3.500a1.200 1.200 0 011.200 1.200v5a1.200 1.200 0 01-1.200 1.200M20 18v5" stroke="#fff" strokeWidth="2" />
  </Svg>
);

const apps: { run?: boolean; active?: boolean; i: React.ReactNode }[] = [
  { i: <Svg w={30} h={28} vb="0 0 30 28"><rect x="0" y="7" width="22" height="21" fill="#2b2b2b" /><rect x="8" y="0" width="22" height="20" fill="#f4f4f4" /><rect x="8" y="7" width="14" height="13" fill="#c4c2c2" /></Svg> },
  {
    i: (
      <Svg w={30} h={30} vb="0 0 30 30">
        <defs><linearGradient id="edge" x1="0" y1="0" x2="1" y2=".4"><stop offset="0" stopColor="#1b8fe0" /><stop offset=".6" stopColor="#2fc2df" /><stop offset="1" stopColor="#5fd65a" /></linearGradient></defs>
        <path d="M0 15A15 15 0 0115 0c9 0 15 6 15 12 0 5-3.500 7.500-8 7.500-3.500 0-5.500-1.200-4-3 2.500-4-1-8-6-8C6 8.500 1 11 0 15z" fill="url(#edge)" />
        <path d="M0 15c1-4 6-6.500 12-6.500 1.500 0 3 .5 4 1-4 1-6 4-5.500 8C11.500 23 18 27 27 23.500A15 15 0 010 15z" fill="#0c59a4" />
        <path d="M0 15c1-4 6-6.500 12-6.500C7 10 4 15 6 21c1.500 4.500 5 8 9 9A15 15 0 010 15z" fill="#1b7fd6" />
      </Svg>
    ),
  },
  {
    run: true,
    i: (
      <Svg w={31} h={28} vb="0 0 31 28">
        <path d="M0 2a2 2 0 012-2h9l3 4H0z" fill="#d99a00" />
        <path d="M0 4h29a2 2 0 012 2v20a2 2 0 01-2 2H2a2 2 0 01-2-2z" fill="#ffcb3d" />
        <path d="M5 28v-7a2 2 0 012-2h17a2 2 0 012 2v7z" fill="#1271c4" />
        <path d="M9 23h13" stroke="#0a4f8f" strokeWidth="1.500" />
      </Svg>
    ),
  },
  {
    i: (
      <Svg w={31} h={28} vb="0 0 31 28">
        <path d="M0 9L15.500 0 31 9v3H0z" fill="#0a53a0" />
        <path d="M3 9h25v10H3z" fill="#f0f4f8" />
        <path d="M0 9l15.500 10L31 9v19H0z" fill="#28a8ea" />
        <path d="M0 28L31 9v19z" fill="#0f78d4" />
        <path d="M3 10.500h25L15.500 18.500z" fill="#f0f4f8" />
      </Svg>
    ),
  },
  { active: true, i: <Chrome /> },
  { run: true, i: <div className="relative"><Settings size={32} color="#6f7780" fill="#7e868e" strokeWidth={1.500} /><i className="absolute top-[9px] left-[9px] size-[14px] rounded-full border-2 border-[#d5dade] bg-[#1266b8]" /></div> },
  {
    run: true,
    i: (
      <Svg w={31} h={26} vb="0 0 31 26">
        <path d="M0 0h31v5L23 26h-4l-4-9-4 9H8z" fill="#ee2a1f" />
        <path d="M6 4l4 12 5-9 2 2M15 7l4 13 6-16h-7" stroke="#f3ddd9" strokeWidth="1.800" />
      </Svg>
    ),
  },
  { run: true, i: <RedDisc /> },
  {
    run: true,
    i: (
      <Svg w={31} h={30} vb="0 0 31 30">
        <path d="M22 0l9 3.500v23L22 30z" fill="#23a8f2" />
        <path d="M2 10l20 17M2 20L22 3" stroke="#0b76bd" strokeWidth="4.500" />
      </Svg>
    ),
  },
  { run: true, i: <WeChat /> },
  {
    run: true,
    i: (
      <Svg w={30} h={30} vb="0 0 30 30">
        <path d="M15 0l6.500 7-6.500 7-6.500-7z" fill="#f0736a" /><path d="M7.500 8l7 7-7 7-7-7z" fill="#7db0fb" />
        <path d="M22.500 8l7 7-7 7-7-7z" fill="#8cc069" /><path d="M15 16l7 7-7 7-7-7z" fill="#fbdb6d" />
        <path d="M15 3v19M15 10l6 5" stroke="#fff" strokeWidth="1.300" /><circle cx="15" cy="21" r="1.800" fill="#fff" />
      </Svg>
    ),
  },
  { run: true, i: <Chrome /> },
  {
    run: true,
    i: (
      <Svg w={24} h={30} vb="0 0 24 30">
        <defs><radialGradient id="orb"><stop offset="0" stopColor="#e6f7ff" /><stop offset=".5" stopColor="#49a6d6" /><stop offset="1" stopColor="#0d4e7c" /></radialGradient></defs>
        <ellipse cx="12" cy="25" rx="8" ry="2.500" fill="#9cb5c4" />
        <circle cx="12" cy="11" r="11" fill="url(#orb)" />
        <ellipse cx="12" cy="6" rx="6" ry="3.500" fill="#fff" opacity=".6" />
      </Svg>
    ),
  },
  { run: true, i: <Ding /> },
];

const Dna = () => (
  <Svg w={52} h={34} vb="0 0 52 34">
    <path d="M1 32c15 0 19-5 22-13S30 4 49 4" stroke="#b9a7c6" strokeWidth="2.500" />
    <path d="M10 34c1-13 7-16 14-18S37 12 37 0" stroke="#a59cbb" strokeWidth="2.500" />
    <path d="M13 26l8 5" stroke="#d94b6a" strokeWidth="2.500" /><path d="M15 22l9 5" stroke="#f2b53b" strokeWidth="2.500" />
    <path d="M18 18.500l7 5" stroke="#2a9d6b" strokeWidth="2.500" /><path d="M28 10l7 4" stroke="#e34b4b" strokeWidth="2.500" />
    <path d="M30 6l9 4.500" stroke="#3b8ff2" strokeWidth="2.500" /><path d="M35 3l9 4" stroke="#31b58a" strokeWidth="2.500" />
    <circle cx="5.500" cy="16" r="4.500" fill="#12b57a" /><circle cx="46" cy="20" r="5" fill="#e2264d" />
    <circle cx="5" cy="5" r="2.300" fill="#f0b429" /><circle cx="17" cy="6.500" r="2.500" fill="#1d7af2" /><circle cx="36" cy="29" r="2" fill="#f0b429" />
  </Svg>
);

const Taskbar = () => (
  <div className="flex h-[59px] shrink-0 border-t border-[#b3adad] bg-[linear-gradient(to_right,#dfdada,#e3dad8_30%,#e9d8d6_58%,#dfdada_75%,#dedada)] text-[#1c1c1c]">
    <div className="flex w-[377px] items-center pl-[24px]">
      <Svg w={32} h={28} vb="0 0 32 28">
        <circle cx="21" cy="9" r="8.500" fill="#f28a1c" />
        <path d="M8 27a7 7 0 01-1-13.500A9 9 0 0124 12a7.500 7.500 0 011 15z" fill="#a9c6f5" />
      </Svg>
      <div className="ml-[8px] pb-[2px] text-[15px] leading-[20px] tracking-[-0.300px]">24°C<br />多云</div>
    </div>
    <div className="mt-[15px] grid size-[29px] grid-cols-2 gap-[1.500px]">
      <i className="bg-[#35b3f5]" /><i className="bg-[#1f9ae8]" /><i className="bg-[#1490e4]" /><i className="bg-[#0a7bd6]" />
    </div>
    <div className="mt-[10px] ml-[18px] flex h-[38px] w-[273px] items-center rounded-full border border-[#cfc9c9] bg-[#f6f3f2] pl-[13px]">
      <Search size={19} strokeWidth={2.300} />
      <span className="ml-[12px] text-[17.500px] text-[#5a5656]">搜索</span>
      <div className="mr-[5px] ml-auto"><Dna /></div>
    </div>
    <div className="ml-[3.500px] flex">
      {apps.map((a, k) => (
        <div key={k} className="relative flex w-[55px] justify-center">
          <div className={`mt-[5px] flex h-[49px] w-[49px] items-center justify-center rounded-[5px] ${a.active ? "border border-[#e6dcda] bg-[#f5eeed]" : ""}`}>{a.i}</div>
          {a.active && <i className="absolute bottom-[5px] h-[4px] w-5 rounded-full bg-[#0067c0]" />}
          {a.run && <i className="absolute bottom-[5px] h-[4px] w-[8px] rounded-full bg-[#807b7b]" />}
        </div>
      ))}
    </div>
    <div className="mr-[24px] ml-auto flex items-center">
      <Svg w={14} h={9} vb="0 0 14 9"><path d="M1 8l6-6 6 6" stroke="#1c1c1c" strokeWidth="1.800" /></Svg>
      <div className="ml-[23px]"><WeChat s={20} /></div>
      <div className="ml-[21px]"><Ding s={18} /></div>
      <div className="ml-[21px]"><RedDisc s={20} /></div>
      <span className="ml-[21px] w-[18px] text-[18px]">英</span>
      <Wifi size={21} strokeWidth={1.900} className="ml-[21px]" />
      <VolumeX size={20} strokeWidth={1.500} className="ml-[9px]" />
      <Svg w={21} h={13} vb="0 0 21 13" className="ml-[10px]">
        <rect x=".8" y=".8" width="17" height="11.400" rx="2.500" stroke="#1c1c1c" strokeWidth="1.500" />
        <rect x="3" y="3" width="12.500" height="7" fill="#1c1c1c" /><path d="M19.500 4.500v4" stroke="#1c1c1c" strokeWidth="2" />
      </Svg>
      <div className="ml-[18px] w-[72px] pb-[2px] text-right text-[14.500px] leading-[20px] tracking-[-0.050px] whitespace-nowrap">15:54<br />2023/6/26</div>
      <div className="ml-[9px] flex size-5 items-center justify-center rounded-full bg-[#0067c0] text-[12px] text-white">2</div>
    </div>
  </div>
);

export default function App() {
  return (
    <div className={`relative flex h-[1079px] w-[1919px] flex-col overflow-hidden ${CHROME_FONT}`}>
      <TabStrip />
      <Toolbar />
      <Bookmarks />
      <div className="flex h-[823px] shrink-0 bg-[#595959] pt-px font-['Liberation_Sans',sans-serif]">
        <Sidebar />
        <main className="flex w-[1704px] flex-col">
          <Header />
          <div className="flex h-[747px]">
            <Editor />
            <Workspace />
          </div>
        </main>
      </div>
      <Shelf />
      <Taskbar />
      <div className="font-['Liberation_Sans',sans-serif]"><Dialog /></div>
    </div>
  );
}
